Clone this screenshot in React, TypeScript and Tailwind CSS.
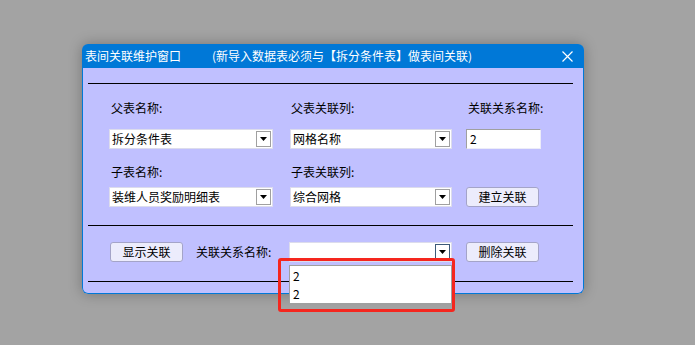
import React from "react";

const font = { fontFamily: '"Noto Sans CJK SC", "Liberation Sans", sans-serif' };

function Combo({ value, width, active }: { value: string; width: string; active?: boolean }) {
  return (
    <div className={`flex h-[20px] ${width} items-stretch border border-[#dcdcec] bg-white`}>
      <div className="flex flex-1 items-center pl-[2px] text-[12px] leading-none text-black">{value}</div>
      <div
        className={`my-[1px] mr-[1px] flex w-[15px] items-center justify-center border bg-white ${
          active ? "border-[#3c5a78]" : "border-[#a0a0a0]"
        }`}
      >
        <svg width="7" height="4" viewBox="0 0 7 4">
          <path d="M0 0 L7 0 L3.5 4 Z" fill="#000" />
        </svg>
      </div>
    </div>
  );
}

function Btn({ label }: { label: string }) {
  return (
    <div className="flex h-[20px] w-[73px] items-center justify-center rounded-[3px] border border-[#a4a4c8] bg-[#ececfc] text-[12px] leading-none text-black">
      {label}
    </div>
  );
}

function Label({ text, className = "" }: { text: string; className?: string }) {
  return <div className={`h-[16px] text-[12px] leading-[16px] text-black ${className}`}>{text}</div>;
}

export default function App() {
  return (
    <div className="relative h-[345px] w-[695px] overflow-hidden bg-[#a3a3a3]" style={font}>
      <div className="ml-[82px] mt-[44px] flex h-[250px] w-[502px] flex-col overflow-hidden rounded-[6px] shadow-[0_0_14px_rgba(0,0,0,0.28)]">
        {/* title bar */}
        <div className="flex h-[24px] items-center bg-[#0078d7] pl-[3px] pr-[11px] text-[12px] text-white">
          <span>表间关联维护窗口</span>
          <span className="ml-[31px]">(新导入数据表必须与【拆分条件表】做表间关联)</span>
          <svg className="ml-auto" width="11" height="11" viewBox="0 0 11 11">
            <path d="M0.5 0.5 L10.5 10.5 M10.5 0.5 L0.5 10.5" stroke="#fff" strokeWidth="1.2" />
          </svg>
        </div>

        {/* body */}
        <div className="flex flex-1 flex-col rounded-b-[6px] border-x border-b border-[#0078d7] bg-[#c0c0ff]">
          <div className="ml-[5px] mt-[15px] h-px w-[485px] bg-black" />

          <div className="ml-[28px] mt-[16px] flex">
            <Label text="父表名称:" className="w-[180px]" />
            <Label text="父表关联列:" className="w-[177px]" />
            <Label text="关联关系名称:" />
          </div>
          <div className="ml-[26px] mt-[13px] flex items-center">
            <Combo value="拆分条件表" width="w-[164px]" />
            <div className="ml-[17px]">
              <Combo value="网格名称" width="w-[162px]" />
            </div>
            <div className="ml-[14px] flex h-[20px] w-[75px] items-center border border-t-[#a0a0a0] border-l-[#a0a0a0] border-r-[#ececf8] border-b-[#ececf8] bg-white pl-[3px] text-[12px] leading-none">
              2
            </div>
          </div>

          <div className="ml-[28px] mt-[15px] flex">
            <Label text="子表名称:" className="w-[180px]" />
            <Label text="子表关联列:" />
          </div>
          <div className="ml-[26px] mt-[7px] flex items-center">
            <Combo value="装维人员奖励明细表" width="w-[164px]" />
            <div className="ml-[17px]">
              <Combo value="综合网格" width="w-[162px]" />
            </div>
            <div className="ml-[14px]">
              <Btn label="建立关联" />
            </div>
          </div>

          <div className="ml-[5px] mt-[18px] h-px w-[485px] bg-black" />

          <div className="ml-[27px] mt-[16px] flex items-center">
            <Btn label="显示关联" />
            <Label text="关联关系名称:" className="ml-[13px] w-[93px]" />
            <Combo value="" width="w-[163px]" active />
            <div className="ml-[14px]">
              <Btn label="删除关联" />
            </div>
          </div>

          <div className="ml-[5px] mt-[19px] h-px w-[485px] bg-black" />
        </div>
      </div>

      {/* open dropdown list */}
      <div className="absolute left-[289px] top-[265px] flex h-[39px] w-[163px] flex-col border border-[#a0a0a0] bg-white pl-[3px] pt-[1px] text-[12px] leading-[18px] text-black">
        <div>2</div>
        <div>2</div>
      </div>

      {/* highlight box */}
      <div className="absolute left-[278px] top-[258px] h-[54px] w-[177px] rounded-[3px] border-[3px] border-[#f5261e]" />
    </div>
  );
}
